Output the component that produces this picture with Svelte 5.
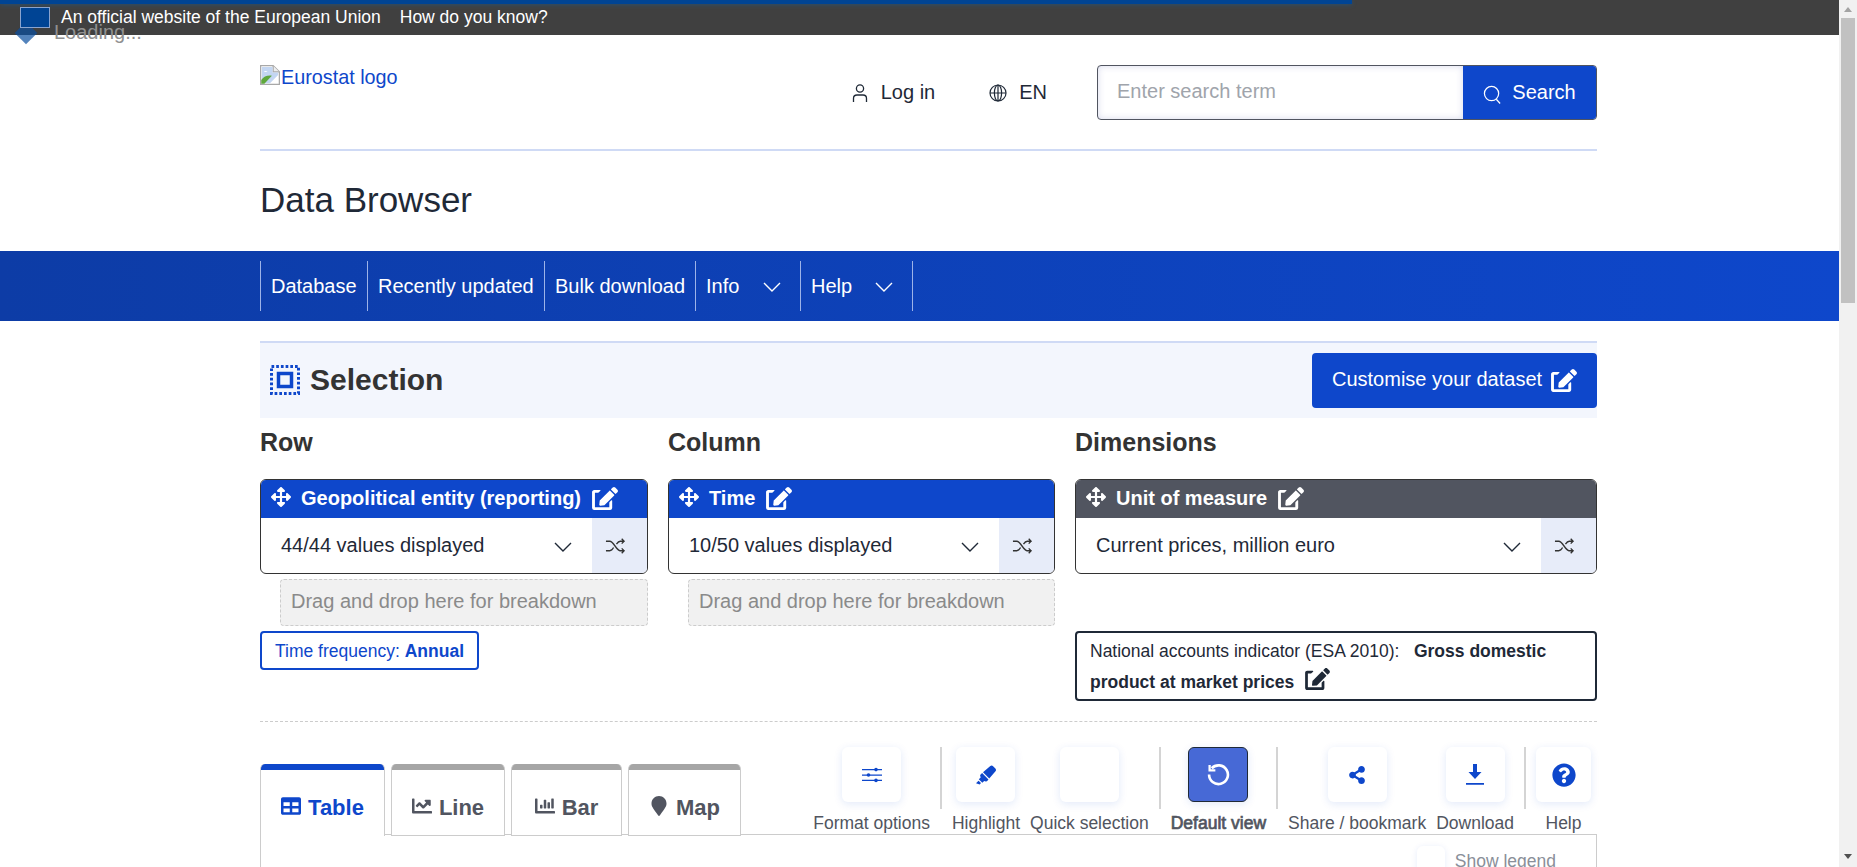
<script lang="ts">
  // font-awesome style solid paths, viewBox is kept with each one
  const icons = {
    move: ['0 0 512 512', 'M352.201 425.775l-79.196 79.196c-9.373 9.373-24.568 9.373-33.941 0l-79.196-79.196c-15.119-15.119-4.411-40.971 16.971-40.97h51.162L228 284H127.196v51.162c0 21.382-25.851 32.09-40.971 16.971L7.029 272.937c-9.373-9.373-9.373-24.569 0-33.941L86.225 159.8c15.119-15.119 40.971-4.411 40.971 16.971V228H228V127.196h-51.23c-21.382 0-32.09-25.851-16.971-40.971l79.196-79.196c9.373-9.373 24.568-9.373 33.941 0l79.196 79.196c15.119 15.119 4.411 40.971-16.971 40.971h-51.162V228h100.804v-51.162c0-21.382 25.851-32.09 40.97-16.971l79.196 79.196c9.373 9.373 9.373 24.569 0 33.941L425.773 352.2c-15.119 15.119-40.971 4.411-40.97-16.971V284H284v100.804h51.23c21.382 0 32.09 25.851 16.971 40.971z'],
    edit: ['0 0 576 512', 'M402.6 83.2l90.2 90.2c3.8 3.8 3.8 10 0 13.8L274.4 405.6l-92.8 10.3c-12.4 1.4-22.9-9.1-21.5-21.5l10.3-92.8L388.8 83.2c3.8-3.8 10-3.8 13.8 0zm162-22.9l-48.8-48.8c-15.2-15.2-39.9-15.2-55.2 0l-35.4 35.4c-3.8 3.8-3.8 10 0 13.8l90.2 90.2c3.8 3.8 10 3.8 13.8 0l35.4-35.4c15.2-15.3 15.2-40 0-55.2zM384 346.2V448H64V128h73.1c3.2 0 6.2-1.3 8.5-3.5l40-40c7.6-7.6 2.2-20.5-8.5-20.5H48C21.5 64 0 85.5 0 112v352c0 26.5 21.5 48 48 48h352c26.5 0 48-21.5 48-48V306.2c0-10.7-12.9-16-20.5-8.5l-40 40c-2.2 2.3-3.5 5.3-3.5 8.5z'],
    table: ['0 0 512 512', 'M464 32H48C21.49 32 0 53.49 0 80v352c0 26.51 21.49 48 48 48h416c26.51 0 48-21.49 48-48V80c0-26.51-21.49-48-48-48zM224 416H64v-96h160v96zm0-160H64v-96h160v96zm224 160H288v-96h160v96zm0-160H288v-96h160v96z'],
    line: ['0 0 512 512', 'M496 384H64V80c0-8.84-7.16-16-16-16H16C7.16 64 0 71.16 0 80v336c0 17.67 14.33 32 32 32h464c8.84 0 16-7.16 16-16v-32c0-8.84-7.16-16-16-16zM464 96H345.94c-21.38 0-32.09 25.85-16.97 40.97l32.4 32.4L288 242.75l-73.37-73.37c-12.5-12.5-32.76-12.5-45.25 0l-68.69 68.69c-6.25 6.25-6.25 16.38 0 22.63l22.62 22.62c6.25 6.25 16.38 6.25 22.63 0L192 237.25l73.37 73.37c12.5 12.5 32.76 12.5 45.25 0l96-96 32.4 32.4c15.12 15.12 40.97 4.41 40.97-16.97V112c.01-8.84-7.15-16-15.99-16z'],
    bar: ['0 0 512 512', 'M332.8 320h38.4c6.4 0 12.8-6.4 12.8-12.8V172.8c0-6.4-6.4-12.8-12.8-12.8h-38.4c-6.4 0-12.8 6.4-12.8 12.8v134.4c0 6.4 6.4 12.8 12.8 12.8zm96 0h38.4c6.4 0 12.8-6.4 12.8-12.8V76.8c0-6.4-6.4-12.8-12.8-12.8h-38.4c-6.4 0-12.8 6.4-12.8 12.8v230.4c0 6.4 6.4 12.8 12.8 12.8zm-288 0h38.4c6.4 0 12.8-6.4 12.8-12.8v-70.4c0-6.4-6.4-12.8-12.8-12.8h-38.4c-6.4 0-12.8 6.4-12.8 12.8v70.4c0 6.4 6.4 12.8 12.8 12.8zm96 0h38.4c6.4 0 12.8-6.4 12.8-12.8V108.8c0-6.4-6.4-12.8-12.8-12.8h-38.4c-6.4 0-12.8 6.4-12.8 12.8v198.4c0 6.4 6.4 12.8 12.8 12.8zM496 384H64V80c0-8.84-7.16-16-16-16H16C7.16 64 0 71.16 0 80v336c0 17.67 14.33 32 32 32h464c8.84 0 16-7.16 16-16v-32c0-8.84-7.16-16-16-16z'],
    map: ['0 0 384 512', 'M172.268 501.67C26.97 291.031 0 269.413 0 192 0 85.961 85.961 0 192 0s192 85.961 192 192c0 77.413-26.97 99.031-172.268 309.67-9.535 13.774-29.93 13.773-39.464 0z'],
    highlight: ['0 0 544 512', 'M0 479.98L99.92 512l35.45-35.45-67.04-67.04L0 479.98zm124.61-240.01a36.592 36.592 0 0 0-10.79 38.1l13.05 42.83-50.93 50.94 96.23 96.23 50.86-50.86 42.74 13.08c13.73 4.2 28.65-.01 38.15-10.78l35.55-41.64-173.34-173.34-41.52 35.44zm403.31-160.7l-63.2-63.2c-20.49-20.49-53.38-21.52-75.12-2.35L190.55 183.68l169.77 169.78L530.27 154.4c19.18-21.74 18.15-54.63-2.35-75.13z'],
    share: ['0 0 448 512', 'M352 320c-22.608 0-43.387 7.819-59.79 20.895l-102.486-64.054a96.551 96.551 0 0 0 0-41.683l102.486-64.054C308.613 184.181 329.392 192 352 192c53.019 0 96-42.981 96-96S405.019 0 352 0s-96 42.981-96 96c0 7.158.79 14.13 2.276 20.841L155.79 180.895C139.387 167.819 118.608 160 96 160c-53.019 0-96 42.981-96 96s42.981 96 96 96c22.608 0 43.387-7.819 59.79-20.895l102.486 64.054A96.301 96.301 0 0 0 256 416c0 53.019 42.981 96 96 96s96-42.981 96-96-42.981-96-96-96z'],
    help: ['0 0 512 512', 'M504 256c0 136.997-111.043 248-248 248S8 392.997 8 256C8 119.083 119.043 8 256 8s248 111.083 248 248zM262.655 90c-54.497 0-89.255 22.957-116.549 63.758-3.536 5.286-2.353 12.415 2.715 16.258l34.699 26.31c5.205 3.947 12.621 3.008 16.665-2.122 17.864-22.658 30.113-35.797 57.303-35.797 20.429 0 45.698 13.148 45.698 32.958 0 14.976-12.363 22.667-32.534 33.976C247.128 238.528 216 254.941 216 296v4c0 6.627 5.373 12 12 12h56c6.627 0 12-5.373 12-12v-1.333c0-28.462 83.186-29.647 83.186-106.667 0-58.002-60.165-102-116.531-102zM256 338c-25.365 0-46 20.635-46 46 0 25.364 20.635 46 46 46s46-20.636 46-46c0-25.365-20.635-46-46-46z'],
  };

  const navItems = [
    { label: 'Database', width: 107 },
    { label: 'Recently updated', width: 177 },
    { label: 'Bulk download', width: 151 },
    { label: 'Info', width: 105, menu: true },
    { label: 'Help', width: 112, menu: true },
  ];

  const tabs = [
    { label: 'Table', icon: 'table', width: 125 },
    { label: 'Line', icon: 'line', width: 114 },
    { label: 'Bar', icon: 'bar', width: 111 },
    { label: 'Map', icon: 'map', width: 113 },
  ];
</script>

{#snippet icon(name, cls)}
  <svg class={cls} viewBox={icons[name][0]} fill="currentColor" aria-hidden="true"><path d={icons[name][1]} /></svg>
{/snippet}

{#snippet chevron()}
  <svg class="chevron" viewBox="0 0 18 10" fill="none" stroke="currentColor" stroke-width="1.4"><path d="M1 1l8 8 8-8" /></svg>
{/snippet}

{#snippet dimension(title, value, grey)}
  <div class="dim">
    <div class="dim-head" class:grey>
      {@render icon('move', 'ic-move')}
      <span>{title}</span>
      {@render icon('edit', 'ic-edit')}
    </div>
    <div class="dim-body">
      <span class="dim-value">{value}</span>
      {@render chevron()}
      <div class="shuffle">
        <svg viewBox="0 0 22 16" fill="none" stroke="#333" stroke-width="1.4">
          <path d="M1 3h4c4 0 7 10 11 10h4M1 13h4c1.500 0 3-1.600 4-3.400M12 6c1-1.500 2.500-3 4-3h4M17.500 .5L20 3l-2.500 2.500M17.500 10.500L20 13l-2.500 2.500" />
        </svg>
      </div>
    </div>
  </div>
{/snippet}

<div class="page">
  <div class="main">
    <div class="loader">
      <span class="diamond"></span>
      <span>Loading...</span>
    </div>

    <div class="global-bar">
      <div class="progress"></div>
      <span class="flag"></span>
      <span class="official">An official website of the European Union</span>
      <span>How do you know?</span>
    </div>

    <div class="wrap">
      <header class="site-header">
        <a class="logo" href="#top">
          <svg class="broken" viewBox="0 0 16 16">
            <path d="M.5.500h10l5 5v10H.5z" fill="#fff" stroke="#a8a8a8" />
            <path d="M10.500.500v5h5" fill="#eee" stroke="#a8a8a8" />
            <path d="M1.500 1.500h8.500v4.500h4.500v2L8 14.500H1.500z" fill="#c3d6f2" />
            <path d="M3 5.500c1-1 2-1 3 0z" fill="#fff" />
            <path d="M1 15v-3C3 9 6 8 9.500 8.500L3.500 15z" fill="#5fa83c" />
          </svg>Eurostat logo</a>
        <div class="tools">
          <span class="tool login">
            <svg viewBox="0 0 18 20" fill="none" stroke="#1f2937" stroke-width="1.3"><circle cx="9" cy="5.500" r="3.600" /><path d="M2.500 19v-3.500c0-2 1.500-3.500 3.500-3.500h6c2 0 3.500 1.500 3.500 3.500V19" /></svg>
            Log in
          </span>
          <span class="tool lang">
            <svg viewBox="0 0 18 18" fill="none" stroke="#1f2937" stroke-width="1.2"><circle cx="9" cy="9" r="8" /><ellipse cx="9" cy="9" rx="3.600" ry="8" /><path d="M1 9h16M9 1v16" /></svg>
            EN
          </span>
          <div class="search">
            <span class="placeholder">Enter search term</span>
            <span class="search-btn">
              <svg viewBox="0 0 20 20" fill="none" stroke="#fff" stroke-width="1.300"><circle cx="9" cy="9" r="7.500" /><path d="M14 15l4 4.500" /></svg>
              Search
            </span>
          </div>
        </div>
      </header>
      <h1>Data Browser</h1>
    </div>

    <nav class="nav">
      <div class="nav-items">
        {#each navItems as item}
          <span class="nav-item" style="width: {item.width}px">
            {item.label}
            {#if item.menu}{@render chevron()}{/if}
          </span>
        {/each}
      </div>
    </nav>

    <div class="wrap">
      <section class="selection">
        <h2>
          <svg viewBox="0 0 30 30" fill="none" stroke="#0e47cb">
            <rect x="1.500" y="1.500" width="27" height="27" stroke-width="3" stroke-dasharray="2.700 2" />
            <rect x="8.500" y="8.500" width="13" height="13" stroke-width="3.500" />
          </svg>
          Selection
        </h2>
        <button class="customise">Customise your dataset {@render icon('edit', 'ic-custom')}</button>
      </section>

      <section class="columns">
        <div class="col">
          <h3>Row</h3>
          {@render dimension('Geopolitical entity (reporting)', '44/44 values displayed', false)}
          <div class="drop">Drag and drop here for breakdown</div>
          <div class="freq">Time frequency: <b>Annual</b></div>
        </div>
        <div class="col">
          <h3>Column</h3>
          {@render dimension('Time', '10/50 values displayed', false)}
          <div class="drop">Drag and drop here for breakdown</div>
        </div>
        <div class="col">
          <h3>Dimensions</h3>
          {@render dimension('Unit of measure', 'Current prices, million euro', true)}
          <div class="indicator">
            National accounts indicator (ESA 2010): &nbsp; <b>Gross domestic product at market prices</b>
            {@render icon('edit', 'ic-ind')}
          </div>
        </div>
      </section>

      <div class="dashed"></div>

      <div class="view-row">
        <div class="tabs">
          {#each tabs as tab, i}
            <div class="tab" class:active={i === 0} style="width: {tab.width}px">
              {@render icon(tab.icon, 'ic-tab')}
              {tab.label}
            </div>
          {/each}
        </div>

        <div class="toolbar">
          <div class="tool-item">
            <span class="tbtn">
              <svg viewBox="0 0 20 16" fill="#0e47cb"><path d="M0 2h20v1.300H0zM0 7.400h20v1.300H0zM0 12.700h20V14H0z" /><circle cx="14" cy="2.600" r="1.800" /><circle cx="6.500" cy="8" r="1.800" /><circle cx="14" cy="13.400" r="1.800" /></svg>
            </span>
            Format options
          </div>
          <span class="sep"></span>
          <div class="tool-item">
            <span class="tbtn">{@render icon('highlight', 'ic-tool')}</span>
            Highlight
          </div>
          <div class="tool-item">
            <span class="tbtn"></span>
            Quick selection
          </div>
          <span class="sep"></span>
          <div class="tool-item selected">
            <span class="tbtn">
              <svg class="ic-reset" viewBox="0 0 22 22" fill="none" stroke="#fff" stroke-width="2.500"><path d="M4.500 5A9 9 0 1 1 2 11" /><path d="M2.500 2v5h5.500" stroke-width="2.200" /></svg>
            </span>
            <span class="selected-label">Default view</span>
          </div>
          <span class="sep"></span>
          <div class="tool-item">
            <span class="tbtn">{@render icon('share', 'ic-share')}</span>
            Share / bookmark
          </div>
          <div class="tool-item">
            <span class="tbtn">
              <svg class="ic-download" viewBox="0 0 18 21" fill="#0e47cb"><path d="M7 0h4v8h4.500L9 15 2.500 8H7zM0 19h18v1.800H0z" /></svg>
            </span>
            Download
          </div>
          <span class="sep"></span>
          <div class="tool-item help">
            <span class="tbtn">{@render icon('help', 'ic-help')}</span>
            Help
          </div>
        </div>
      </div>

      <div class="panel">
        <div class="legend"><span class="legend-box"></span>Show legend</div>
      </div>
    </div>
  </div>

  <div class="scrollbar">
    <span class="arrow up"></span>
    <span class="thumb"></span>
    <span class="arrow down"></span>
  </div>
</div>

<style>
  :global(body) {
    margin: 0;
    overflow: hidden;
    background: #fff;
  }
  .page {
    display: flex;
    height: 867px;
    overflow: hidden;
    font-family: "Liberation Sans", Arial, sans-serif;
    color: #1f2937;
  }
  .main {
    position: relative;
    flex: 1;
    min-width: 0;
    overflow: hidden;
  }

  /* left-over page loader, it sits over the top bar */
  .loader {
    position: absolute;
    left: 15px;
    top: 21px;
    z-index: 2;
    display: flex;
    align-items: center;
    gap: 20px;
    font-size: 20px;
    color: #909090;
  }
  .diamond {
    width: 16px;
    height: 16px;
    margin-left: 3px;
    background: #0a4fa0;
    opacity: 0.7;
    transform: rotate(45deg);
  }

  .global-bar {
    position: relative;
    display: flex;
    align-items: center;
    height: 35px;
    padding-left: 20px;
    box-sizing: border-box;
    background: #404040;
    color: #fff;
    font-size: 17.500px;
  }
  .progress {
    position: absolute;
    left: 0;
    top: 0;
    width: 1352px;
    height: 4px;
    background: #004494;
    box-shadow: 0 1px 4px rgba(0, 110, 200, 0.35);
  }
  .flag {
    position: relative;
    z-index: 3;
    width: 28px;
    height: 19px;
    margin-right: 11px;
    margin-top: -1px;
    background: #004494;
    border: 1px solid #8aa4cf;
  }
  .official {
    margin-right: 19px;
  }

  .wrap {
    width: 1337px;
    margin-left: 260px;
  }
  .site-header {
    display: flex;
    justify-content: space-between;
    height: 116px;
    box-sizing: border-box;
    border-bottom: 2px solid #cfdaf5;
  }
  .logo {
    display: flex;
    align-items: flex-start;
    height: 24px;
    margin-top: 30px;
    color: #0e47cb;
    font-size: 19.800px;
    line-height: 24px;
    text-decoration: none;
  }
  .broken {
    width: 20px;
    height: 20px;
    margin-right: 1px;
  }
  .tools {
    display: flex;
    align-items: flex-start;
  }
  .tool {
    display: flex;
    align-items: center;
    height: 24px;
    margin-top: 45px;
    font-size: 20px;
    color: #1f2937;
  }
  .login svg {
    width: 18px;
    height: 20px;
    margin-right: 12px;
    margin-top: 2px;
  }
  .login {
    margin-right: 54px;
  }
  .lang svg {
    width: 18px;
    height: 18px;
    margin-right: 12px;
    margin-top: 2px;
  }
  .lang {
    margin-right: 50px;
  }
  .search {
    display: flex;
    width: 500px;
    height: 55px;
    margin-top: 30px;
    box-sizing: border-box;
    border: 1px solid #515560;
    border-radius: 4px;
    overflow: hidden;
  }
  .placeholder {
    flex: 1;
    padding: 14px 0 0 19px;
    font-size: 20px;
    color: #a0a4ab;
    box-shadow: inset 0 0 7px rgba(60, 70, 160, 0.2);
  }
  .search-btn {
    display: flex;
    align-items: center;
    justify-content: center;
    gap: 10px;
    width: 133px;
    background: #0e47cb;
    color: #fff;
    font-size: 20px;
  }
  .search-btn svg {
    width: 19px;
    height: 19px;
    margin-top: 3px;
  }
  h1 {
    margin: 0;
    height: 100px;
    padding-top: 28px;
    box-sizing: border-box;
    font-size: 35px;
    line-height: 42px;
    font-weight: 400;
    color: #1f2937;
  }

  .nav {
    height: 70px;
    padding: 10px 0 0 260px;
    box-sizing: border-box;
    background: linear-gradient(90deg, #0d3ca6 0%, #0e47cb 100%);
  }
  .nav-items {
    display: flex;
    height: 50px;
    border-left: 1px solid #9db3e8;
    width: fit-content;
  }
  .nav-item {
    display: flex;
    align-items: center;
    justify-content: space-between;
    padding: 0 19px 0 10px;
    box-sizing: border-box;
    border-right: 1px solid #9db3e8;
    color: #fff;
    font-size: 20px;
  }
  .nav-item:nth-child(-n + 3) {
    padding-right: 0;
  }
  .nav-item .chevron {
    width: 18px;
    height: 10px;
    margin-top: 2px;
  }

  .selection {
    display: flex;
    align-items: center;
    justify-content: space-between;
    height: 77px;
    margin-top: 20px;
    box-sizing: border-box;
    border-top: 2px solid #cfdaf5;
    background: #f3f6fd;
  }
  h2 {
    display: flex;
    align-items: center;
    gap: 10px;
    margin: -2px 0 0 10px;
    font-size: 30px;
    line-height: 36px;
    color: #333;
  }
  h2 svg {
    width: 30px;
    height: 30px;
  }
  .customise {
    display: flex;
    align-items: center;
    gap: 9px;
    width: 285px;
    height: 55px;
    padding: 0 0 2px 20px;
    border: 0;
    border-radius: 4px;
    background: #0e47cb;
    color: #fff;
    font-family: inherit;
    font-size: 20px;
  }
  .ic-custom {
    width: 26px;
    height: 23px;
    margin-top: 2px;
  }

  .columns {
    display: grid;
    grid-template-columns: 388px 387px 522px;
    column-gap: 20px;
  }
  h3 {
    margin: 10px 0 0;
    height: 51px;
    font-size: 25px;
    line-height: 28px;
    color: #333;
  }
  .dim {
    height: 95px;
    box-sizing: border-box;
    border: 1px solid #333;
    border-radius: 6px;
    overflow: hidden;
  }
  .dim-head {
    display: flex;
    align-items: center;
    height: 38px;
    padding-left: 10px;
    padding-bottom: 1px;
    box-sizing: border-box;
    background: #0e47cb;
    color: #fff;
    font-size: 20px;
    font-weight: 700;
  }
  .dim-head.grey {
    background: #515560;
  }
  .ic-move {
    width: 20px;
    height: 20px;
    margin-right: 10px;
    margin-top: -4px;
  }
  .ic-edit {
    width: 26px;
    height: 23px;
    margin-left: 11px;
  }
  .dim-body {
    display: flex;
    align-items: center;
    height: 55px;
    padding-left: 20px;
    font-size: 20px;
  }
  .dim-value {
    flex: 1;
    color: #1f2937;
  }
  .dim-body .chevron {
    width: 18px;
    height: 10px;
    margin-right: 20px;
    color: #1f2937;
    margin-top: 2px;
  }
  .shuffle {
    display: flex;
    align-items: center;
    justify-content: center;
    width: 55px;
    height: 100%;
    padding-right: 9px;
    box-sizing: border-box;
    background: #e7ecf9;
  }
  .shuffle svg {
    width: 21px;
    height: 16px;
  }

  .drop {
    height: 47px;
    margin: 5px 0 0 20px;
    padding-left: 10px;
    box-sizing: border-box;
    border: 1px dashed #ccc;
    border-radius: 4px;
    background: #f1f1f1;
    color: #8a8a8a;
    font-size: 20px;
    line-height: 43px;
  }
  .freq {
    width: fit-content;
    height: 39px;
    margin-top: 5px;
    padding: 0 13px;
    box-sizing: border-box;
    border: 2px solid #0e47cb;
    border-radius: 4px;
    color: #0e47cb;
    font-size: 17.500px;
    line-height: 36px;
  }
  .indicator {
    height: 70px;
    margin-top: 57px;
    padding: 3px 13px 0;
    box-sizing: border-box;
    border: 2px solid #1f2937;
    border-radius: 4px;
    color: #1f2937;
    font-size: 17.500px;
    line-height: 31px;
  }
  .ic-ind {
    width: 25px;
    height: 22px;
    margin-left: 6px;
    vertical-align: -2px;
  }

  .dashed {
    height: 0;
    margin-top: 20px;
    border-top: 1px dashed #ccc;
  }
  .view-row {
    display: flex;
    justify-content: space-between;
    align-items: flex-end;
    height: 112px;
  }
  .tabs {
    display: flex;
    gap: 6px;
    margin-bottom: -2px;
    position: relative;
    z-index: 1;
  }
  .tab {
    display: flex;
    align-items: center;
    justify-content: center;
    gap: 7px;
    height: 72px;
    padding-top: 16px;
    box-sizing: border-box;
    border: 1px solid #ccc;
    border-top: 0;
    border-radius: 5px 5px 0 0;
    background: linear-gradient(#a6a6a6 6px, #fff 6px);
    color: #515560;
    font-size: 22px;
    font-weight: 700;
  }
  .tab.active {
    border-bottom: 0;
    background: linear-gradient(#0e47cb 6px, #fff 6px);
    color: #0e47cb;
  }
  .ic-tab {
    width: 20px;
    height: 20px;
    margin-top: -4px;
  }

  .toolbar {
    display: flex;
    gap: 10px;
    margin-right: 6px;
  }
  .tool-item {
    display: flex;
    flex-direction: column;
    align-items: center;
    height: 87px;
    color: #515560;
    font-size: 17.500px;
    line-height: 18px;
    white-space: nowrap;
  }
  /* the active label is thickened, it keeps the regular widths */
  .selected-label {
    -webkit-text-stroke: 0.7px #515560;
  }
  .tool-item.help {
    width: 55px;
  }
  .tbtn {
    display: flex;
    align-items: center;
    justify-content: center;
    width: 59px;
    height: 55px;
    margin-bottom: 12px;
    flex-shrink: 0;
    border-radius: 6px;
    background: #fff;
    box-shadow: 0 2px 9px rgba(14, 71, 203, 0.12);
    color: #0e47cb;
  }
  .help .tbtn {
    width: 55px;
  }
  .tbtn svg {
    width: 20px;
    height: 20px;
  }
  .tbtn .ic-help {
    width: 24px;
    height: 24px;
  }
  .tbtn .ic-share {
    width: 16px;
    height: 18px;
  }
  .tbtn .ic-download {
    width: 18px;
    height: 21px;
  }
  .tbtn .ic-reset {
    width: 23px;
    height: 23px;
  }
  .selected .tbtn {
    width: 58px;
    height: 53px;
    border: 1px solid #1f2937;
    background: #4769d6;
  }
  .sep {
    width: 2px;
    height: 62px;
    background: #d4d4d4;
    align-self: flex-start;
  }

  .panel {
    height: 200px;
    border: 1px solid #ccc;
    position: relative;
  }
  .legend {
    display: flex;
    justify-content: flex-end;
    align-items: flex-start;
    gap: 10px;
    padding: 17px 40px 0 0;
    color: #8a8f99;
    font-size: 17.500px;
    line-height: 18px;
  }
  .legend-box {
    width: 28px;
    height: 40px;
    margin-top: -6px;
    border-radius: 6px;
    box-shadow: 0 1px 6px rgba(14, 71, 203, 0.1);
  }

  .scrollbar {
    position: relative;
    width: 18px;
    flex-shrink: 0;
    background: #f1f1f1;
  }
  .thumb {
    position: absolute;
    top: 18px;
    left: 2px;
    width: 14px;
    height: 285px;
    background: #c1c1c1;
  }
  .arrow {
    position: absolute;
    left: 5px;
    width: 0;
    height: 0;
    border-left: 4px solid transparent;
    border-right: 4px solid transparent;
  }
  .arrow.up {
    top: 7px;
    border-bottom: 5px solid #a3a3a3;
  }
  .arrow.down {
    top: 854px;
    border-top: 5px solid #505050;
  }
</style>
